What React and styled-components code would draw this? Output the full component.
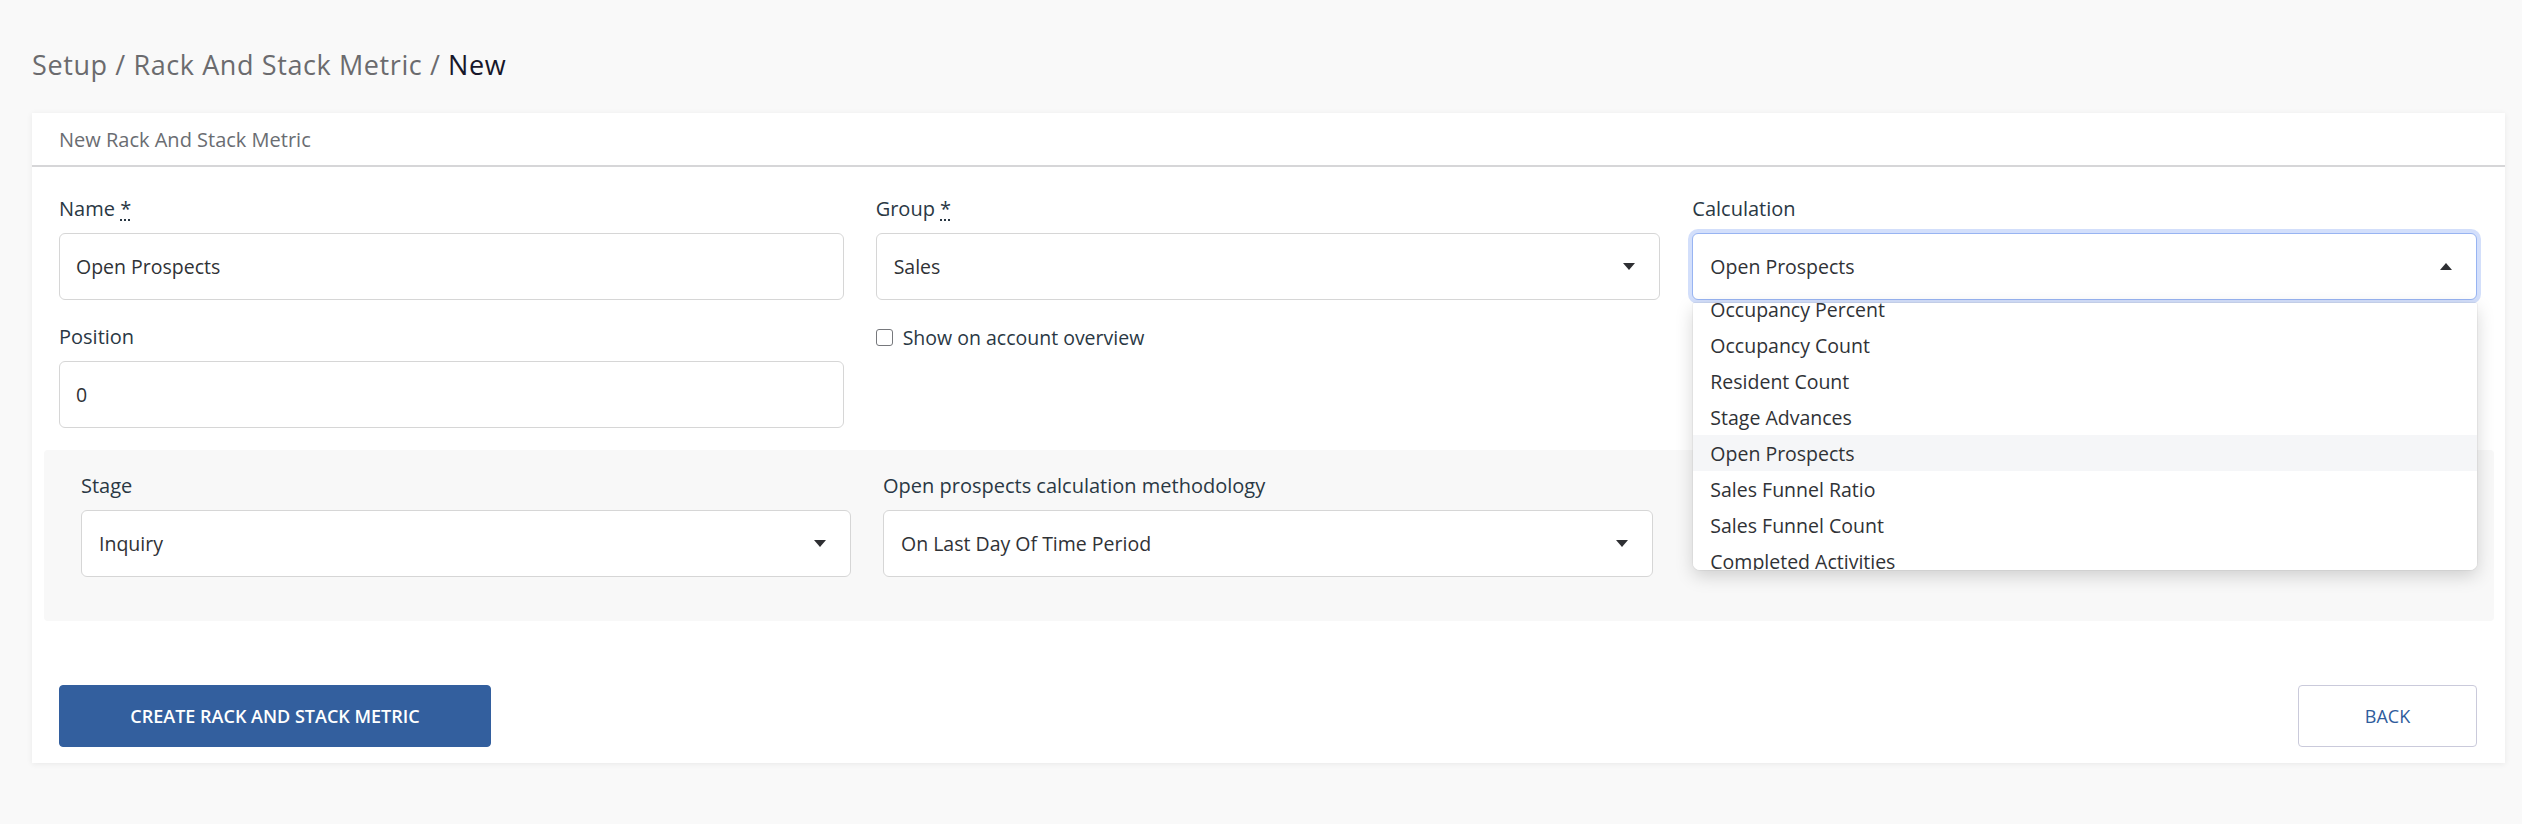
import styled, { createGlobalStyle } from "styled-components"

const GlobalStyle = createGlobalStyle`
    body {
        margin: 0;
        background: #f9f9f9;
        font-family: "Open Sans", "Liberation Sans", sans-serif;
    }
`

const Page = styled.div`
    padding: 0 17px 50px 32px;
`

const Breadcrumb = styled.h1`
    margin: 0 0 29px;
    padding-top: 46px;
    line-height: 38px;
    font-size: 27px;
    font-weight: 400;
    letter-spacing: 0.6px;
    color: #6b6b6e;

    .current {
        color: #17172a;
    }
`

const Card = styled.div`
    background: #fff;
    box-shadow: 0 1px 6px rgba(0, 0, 0, 0.07);
`

const CardHeader = styled.div`
    height: 52px;
    display: flex;
    align-items: center;
    padding: 0 27px;
    border-bottom: 2px solid #d6d6d8;
    font-size: 20px;
    color: #6a6d72;
`

const CardBody = styled.div`
    padding: 27px 28px 16px 27px;
`

const Row = styled.div`
    display: grid;
    grid-template-columns: repeat(3, 1fr);
    column-gap: 32px;
`

const Field = styled.div`
    position: relative;
    margin-bottom: 22px;
`

const Label = styled.label`
    display: block;
    line-height: 30px;
    margin-bottom: 9px;
    font-size: 20px;
    color: #2a3844;

    abbr {
        text-decoration: underline dotted;
        text-underline-offset: 3px;
    }
`

const Control = styled.div`
    height: 67px;
    box-sizing: border-box;
    display: flex;
    align-items: center;
    justify-content: space-between;
    padding: 0 24px 0 ${(p) => (p.$select ? 17 : 16)}px;
    background: #fff;
    border: 1px solid ${(p) => (p.$focused ? "#98b4f2" : "#d6d6d6")};
    border-radius: 6px;
    box-shadow: ${(p) => (p.$focused ? "0 0 0 4px #d3dffb" : "none")};
    font-size: 19.5px;
    color: #303236;
`

const Caret = styled.svg`
    width: 12px;
    height: 7px;
    fill: #2e2f33;
    transform: ${(p) => (p.$up ? "rotate(180deg)" : "none")};
`

const CheckRow = styled.label`
    display: flex;
    align-items: center;
    gap: 10px;
    height: 30px;
    font-size: 19.5px;
    color: #2a3844;
`

const Box = styled.span`
    width: 15px;
    height: 15px;
    border: 1.5px solid #76787c;
    border-radius: 3px;
    background: #fff;
`

const Menu = styled.div`
    position: absolute;
    top: calc(100% + 3px);
    left: 1px;
    right: 0;
    height: 267px;
    overflow: hidden;
    background: #fff;
    border-radius: 2px 2px 7px 7px;
    box-shadow: 0 6px 18px rgba(0, 0, 0, 0.17), 0 0 0 1px rgba(0, 0, 0, 0.04);
    z-index: 5;
`

const MenuList = styled.ul`
    list-style: none;
    margin: -12px 0 0;
    padding: 0;
`

const MenuItem = styled.li`
    height: 36px;
    display: flex;
    align-items: center;
    padding: 0 17px;
    font-size: 19.5px;
    color: #303236;
    background: ${(p) => (p.$active ? "#f5f6f8" : "#fff")};
`

const Panel = styled.div`
    margin: 0 -17px 64px -15px;
    padding: 21px 39px 22px 37px;
    background: #f8f8f8;
    border-radius: 4px;
`

const Footer = styled.div`
    display: flex;
    justify-content: space-between;
    align-items: center;
`

const Button = styled.button`
    height: 62px;
    width: ${(p) => (p.$primary ? 432 : 179)}px;
    border-radius: 4px;
    border: 1px solid ${(p) => (p.$primary ? "#335f9e" : "#cacadb")};
    background: ${(p) => (p.$primary ? "#335f9e" : "#fff")};
    color: ${(p) => (p.$primary ? "#fff" : "#2f5c9c")};
    font-family: inherit;
    font-size: 18px;
    font-weight: ${(p) => (p.$primary ? 600 : 400)};
    text-transform: uppercase;
`

const CaretIcon = ({ up }) => (
    <Caret viewBox="0 0 12 7" $up={up}>
        <path d="M0 0h12L6 7z" />
    </Caret>
)

const calculations = [
    "Occupancy Percent",
    "Occupancy Count",
    "Resident Count",
    "Stage Advances",
    "Open Prospects",
    "Sales Funnel Ratio",
    "Sales Funnel Count",
    "Completed Activities",
    "Scheduled Activities",
]

const App = () => {
    return (
        <Page>
            <GlobalStyle />
            <Breadcrumb>
                Setup / Rack And Stack Metric / <span className="current">New</span>
            </Breadcrumb>
            <Card>
                <CardHeader>New Rack And Stack Metric</CardHeader>
                <CardBody>
                    <Row>
                        <Field>
                            <Label>Name <abbr title="required">*</abbr></Label>
                            <Control>Open Prospects</Control>
                        </Field>
                        <Field>
                            <Label>Group <abbr title="required">*</abbr></Label>
                            <Control $select>
                                Sales
                                <CaretIcon />
                            </Control>
                        </Field>
                        <Field>
                            <Label>Calculation</Label>
                            <div style={{ position: "relative" }}>
                                <Control $select $focused>
                                    Open Prospects
                                    <CaretIcon up />
                                </Control>
                                <Menu>
                                    <MenuList>
                                        {calculations.map((c) => (
                                            <MenuItem key={c} $active={c === "Open Prospects"}>
                                                {c}
                                            </MenuItem>
                                        ))}
                                    </MenuList>
                                </Menu>
                            </div>
                        </Field>
                    </Row>
                    <Row>
                        <Field>
                            <Label>Position</Label>
                            <Control>0</Control>
                        </Field>
                        <Field>
                            <CheckRow>
                                <Box />
                                Show on account overview
                            </CheckRow>
                        </Field>
                        <div />
                    </Row>
                    <Panel>
                        <Row>
                            <Field>
                                <Label>Stage</Label>
                                <Control $select>
                                    Inquiry
                                    <CaretIcon />
                                </Control>
                            </Field>
                            <Field>
                                <Label>Open prospects calculation methodology</Label>
                                <Control $select>
                                    On Last Day Of Time Period
                                    <CaretIcon />
                                </Control>
                            </Field>
                            <div />
                        </Row>
                    </Panel>
                    <Footer>
                        <Button $primary>Create Rack And Stack Metric</Button>
                        <Button>Back</Button>
                    </Footer>
                </CardBody>
            </Card>
        </Page>
    )
}

export default App
